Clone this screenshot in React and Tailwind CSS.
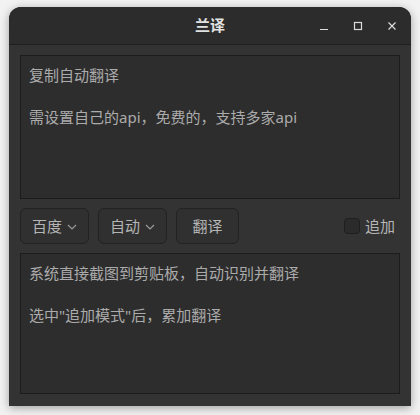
import React from 'react';

const Chevron = () => (
  <svg width="10" height="6" viewBox="0 0 10 6" className="ml-[5px] mt-[1px]">
    <path d="M1 1 L5 5 L9 1" fill="none" stroke="#9a9a9a" strokeWidth="1.2" />
  </svg>
);

const App = () => {
  return (
    <div className="w-[420px] h-[415px] bg-[#f2f2f2] pt-[7px] px-[9px] font-['Noto_Sans','Noto_Sans_CJK_SC',sans-serif]">
      <div className="w-[402px] h-[399px] flex flex-col rounded-t-[12px] bg-[#333333] shadow-[0_2px_10px_rgba(0,0,0,0.35)] overflow-hidden">
        {/* title bar */}
        <div className="relative h-[38px] shrink-0 flex items-center justify-center bg-[#2c2c2c] border-b border-[#1f1f1f]">
          <span className="text-[15px] font-bold text-[#e2e2e2] leading-none">兰译</span>
          <div className="absolute right-0 top-0 h-full flex items-center">
            <button className="w-[34px] h-full flex items-center justify-center">
              <svg width="10" height="10" viewBox="0 0 10 10">
                <path d="M1 8.5 H9" stroke="#dcdcdc" strokeWidth="1.2" />
              </svg>
            </button>
            <button className="w-[34px] h-full flex items-center justify-center">
              <svg width="10" height="10" viewBox="0 0 10 10">
                <rect x="1.5" y="1.5" width="7" height="7" fill="none" stroke="#dcdcdc" strokeWidth="1.2" />
              </svg>
            </button>
            <button className="w-[34px] h-full flex items-center justify-center mr-[2px]">
              <svg width="10" height="10" viewBox="0 0 10 10">
                <path d="M1.5 1.5 L8.5 8.5 M8.5 1.5 L1.5 8.5" stroke="#dcdcdc" strokeWidth="1.2" />
              </svg>
            </button>
          </div>
        </div>

        {/* body */}
        <div className="flex-1 flex flex-col px-[11px] pt-[10px] pb-[12px]">
          <div className="h-[144px] shrink-0 bg-[#2d2d2d] border border-[#1c1c1c] pl-[8px] pt-[9px] text-[15px] leading-[21px] text-[#ababab] whitespace-pre-line">
            {'复制自动翻译\n\n需设置自己的api，免费的，支持多家api'}
          </div>

          <div className="flex items-center h-[36px] mt-[9px] shrink-0">
            <button className="w-[69px] h-[36px] flex items-center justify-center rounded-[6px] border border-[#222222] bg-[#303030] text-[15px] text-[#b5b5b5]">
              百度<Chevron />
            </button>
            <button className="w-[69px] h-[36px] ml-[9px] flex items-center justify-center rounded-[6px] border border-[#222222] bg-[#303030] text-[15px] text-[#b5b5b5]">
              自动<Chevron />
            </button>
            <button className="w-[63px] h-[36px] ml-[9px] flex items-center justify-center rounded-[6px] border border-[#222222] bg-[#303030] text-[15px] text-[#b5b5b5]">
              翻译
            </button>
            <label className="ml-auto mr-[5px] flex items-center text-[15px] text-[#b5b5b5]">
              <span className="w-[16px] h-[16px] rounded-[4px] border border-[#1e1e1e] bg-[#2b2b2b] mr-[5px]"></span>
              追加
            </label>
          </div>

          <div className="flex-1 mt-[9px] bg-[#2d2d2d] border border-[#1c1c1c] pl-[8px] pt-[9px] text-[15px] leading-[21px] text-[#ababab] whitespace-pre-line">
            {'系统直接截图到剪贴板，自动识别并翻译\n\n选中"追加模式"后，累加翻译'}
          </div>
        </div>
      </div>
    </div>
  );
};

export default App;
